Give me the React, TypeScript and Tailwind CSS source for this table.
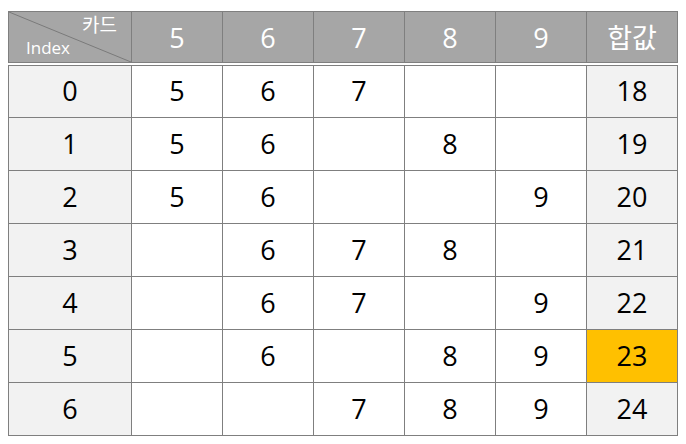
import React from "react";

const rows: { idx: number; cards: (number | null)[]; sum: number; hl?: boolean }[] = [
  { idx: 0, cards: [5, 6, 7, null, null], sum: 18 },
  { idx: 1, cards: [5, 6, null, 8, null], sum: 19 },
  { idx: 2, cards: [5, 6, null, null, 9], sum: 20 },
  { idx: 3, cards: [null, 6, 7, 8, null], sum: 21 },
  { idx: 4, cards: [null, 6, 7, null, 9], sum: 22 },
  { idx: 5, cards: [null, 6, null, 8, 9], sum: 23, hl: true },
  { idx: 6, cards: [null, null, 7, 8, 9], sum: 24 },
];

const font = { fontFamily: '"Open Sans", "Noto Sans CJK KR", sans-serif' };

export default function App() {
  return (
    <div className="w-[686px] h-[444px] bg-white pl-[8px] pt-[11px]" style={font}>
      {/* header */}
      <div className="w-[670px] h-[52px] flex border border-[#7f7f7f] bg-[#a6a6a6] text-white">
        <div className="relative w-[122px] h-full shrink-0">
          <svg className="absolute inset-0" width="122" height="50" viewBox="0 0 122 50">
            <line x1="0" y1="0" x2="122" y2="50" stroke="#7a7a7a" strokeWidth="1" />
          </svg>
          <span className="absolute right-[14px] top-[1px] text-[19px] leading-[24px]">카드</span>
          <span className="absolute left-[17px] top-[24px] text-[17px] leading-[24px]">Index</span>
        </div>
        {["5", "6", "7", "8", "9", "합값"].map((h) => (
          <div
            key={h}
            className="w-[91px] h-full shrink-0 border-l border-[#7f7f7f] flex items-center justify-center text-[27px] pt-[2px]"
          >
            {h}
          </div>
        ))}
      </div>
      {/* body */}
      <div className="w-[670px] mt-[2px] border-l border-r border-b border-[#7f7f7f] text-black">
        {rows.map((r, i) => (
          <div
            key={r.idx}
            className={`flex border-t border-[#7f7f7f] ${i === 0 ? "h-[52px]" : "h-[53px]"}`}
          >
            <div className="w-[122px] shrink-0 bg-[#f2f2f2] flex items-center justify-center text-[27px]">
              {r.idx}
            </div>
            {r.cards.map((c, j) => (
              <div
                key={j}
                className="w-[91px] shrink-0 border-l border-[#7f7f7f] bg-white flex items-center justify-center text-[27px]"
              >
                {c ?? ""}
              </div>
            ))}
            <div
              className={`w-[91px] shrink-0 border-l border-[#7f7f7f] flex items-center justify-center text-[27px] ${
                r.hl ? "bg-[#ffc000]" : "bg-[#f2f2f2]"
              }`}
            >
              {r.sum}
            </div>
          </div>
        ))}
      </div>
    </div>
  );
}
